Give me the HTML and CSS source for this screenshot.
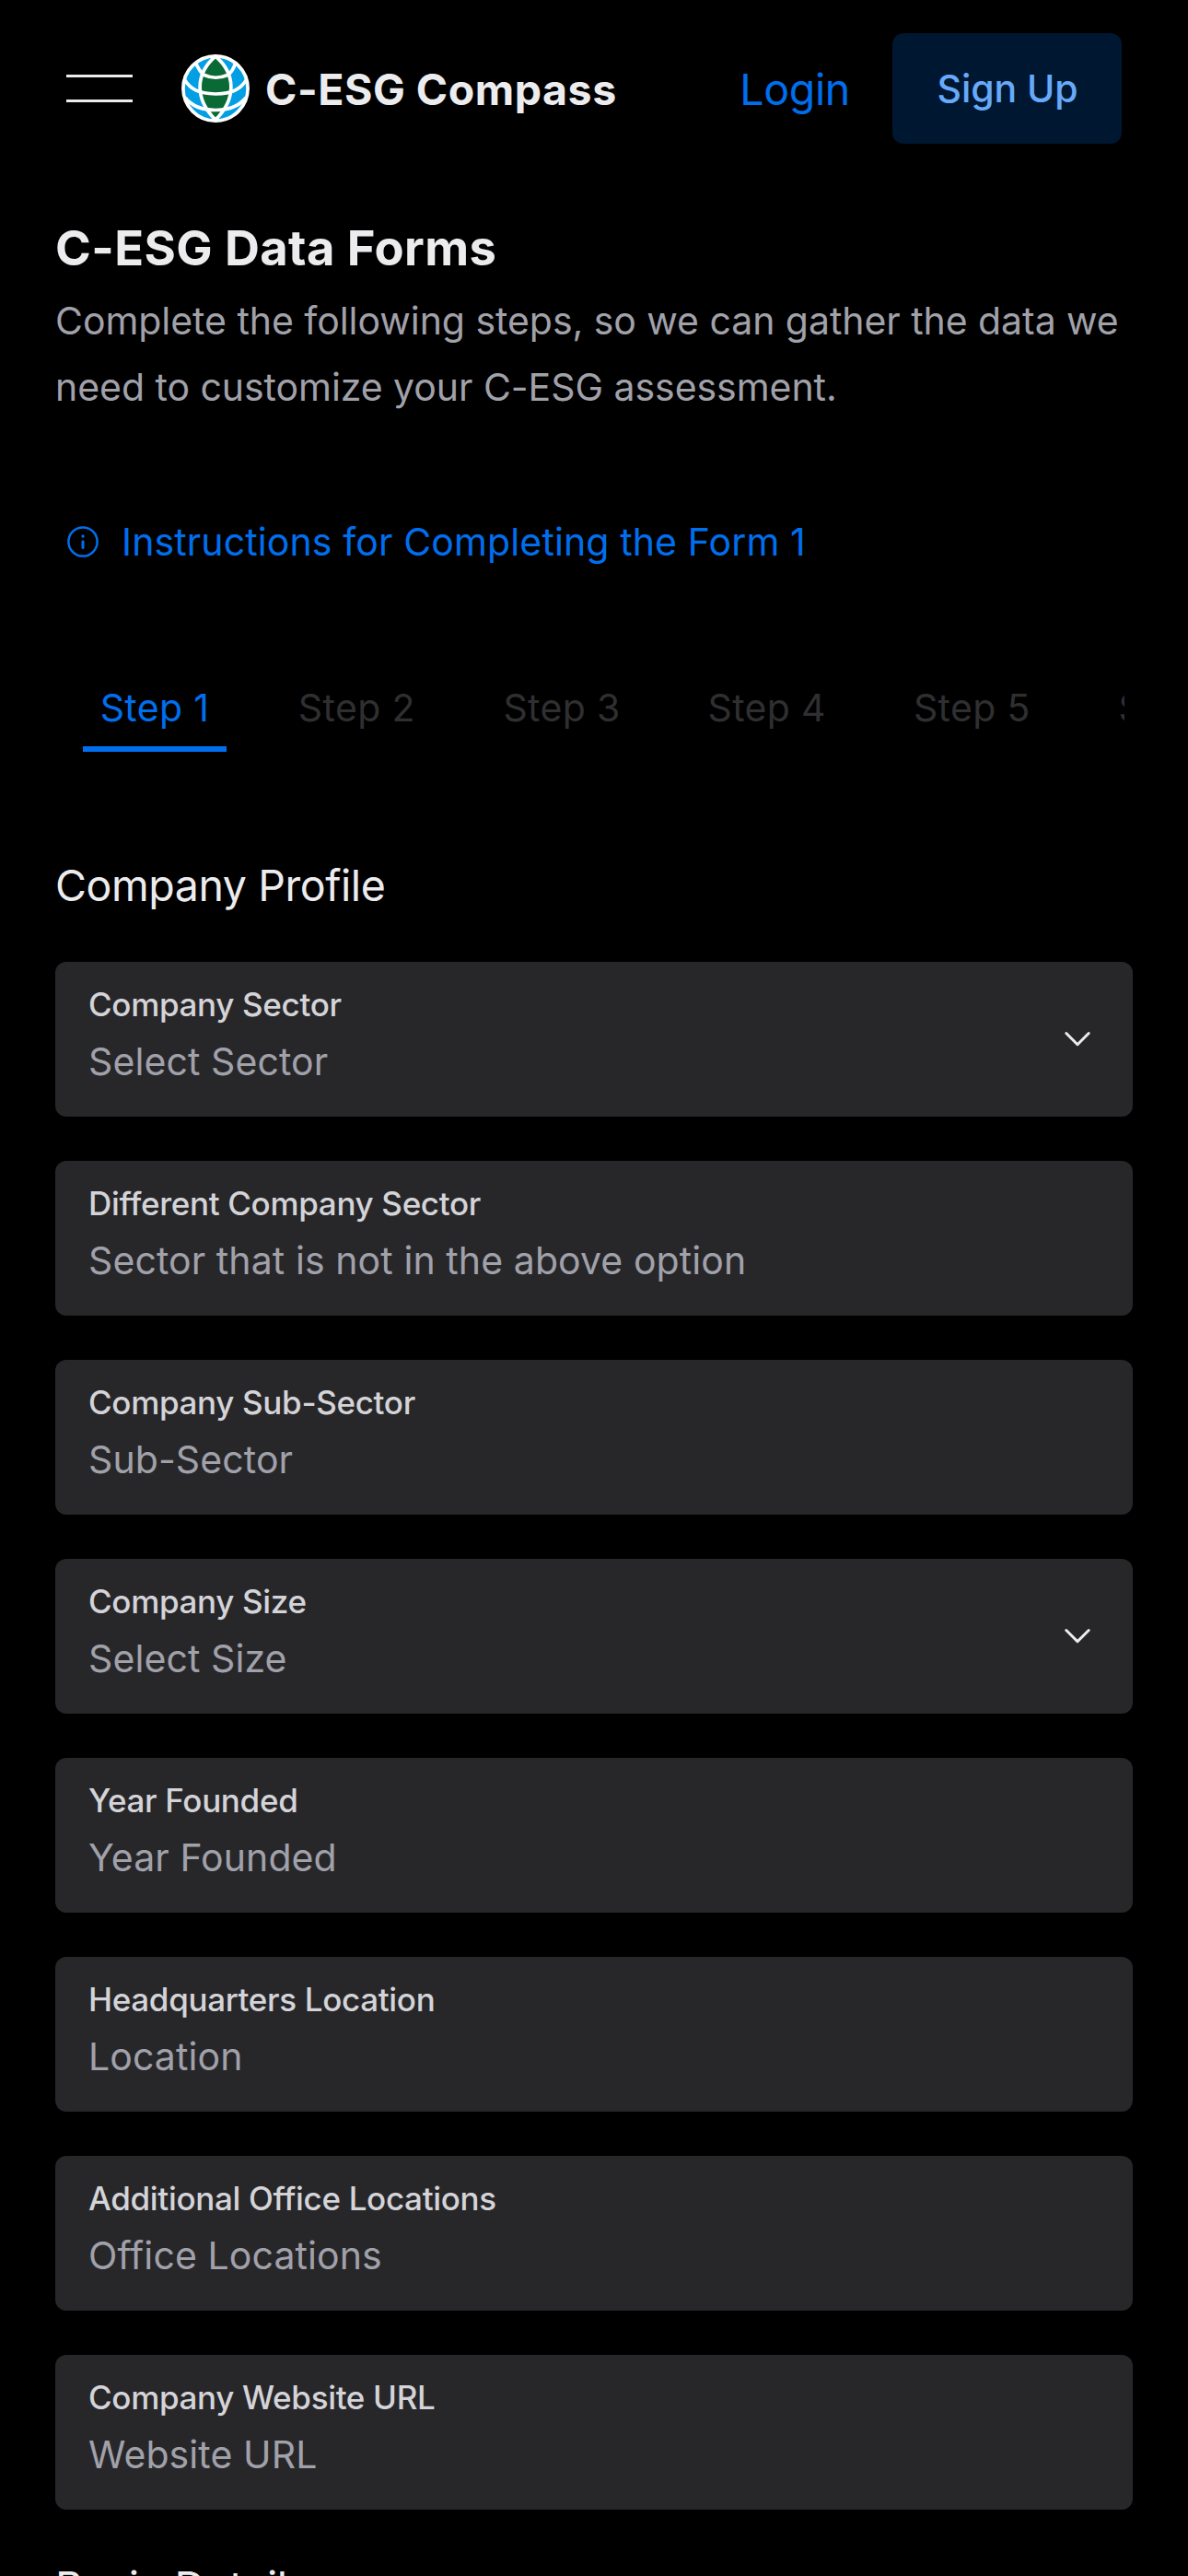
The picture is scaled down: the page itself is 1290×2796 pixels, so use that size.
FILE: index.html
```html
<!DOCTYPE html>
<html lang="en">
<head>
<meta charset="utf-8">
<title>C-ESG Compass</title>
<link rel="stylesheet" href="styles.css">
</head>
<body>
<header class="navbar">
  <button class="menu-toggle" aria-label="Open menu"><span></span><span></span></button>
  <a class="brand">
    <svg class="logo" viewBox="0 0 74 74">
      <circle cx="37" cy="37" r="35.4" fill="#039fe5"/>
      <path d="M37 2C15 21 14 48 37 71C60 48 59 21 37 2Z" fill="#0a6a35"/>
      <g fill="none" stroke="#fff" stroke-width="3.7">
        <circle cx="37" cy="37" r="35.1"/>
        <path d="M37 2C15 21 14 48 37 71C60 48 59 21 37 2Z"/>
        <path d="M15 8Q20 20 25 22.500Q37 28 50 22.500Q56 19 59 8"/>
        <path d="M3 27C10 38 18 42.500 37 43C56 42.500 64 38 71 27"/>
        <path d="M4 47C12 57 24 60.500 37 60.500C50 60.500 62 57 70 47"/>
      </g>
    </svg>
    <span class="brand-name">C-ESG Compass</span>
  </a>
  <nav class="actions">
    <a class="login">Login</a>
    <a class="signup">Sign Up</a>
  </nav>
</header>
<main class="content">
  <h1 class="title">C-ESG Data Forms</h1>
  <p class="intro">Complete the following steps, so we can gather the data we need to customize your C-ESG assessment.</p>
  <a class="instructions">
    <svg class="info" viewBox="0 0 36 36">
      <circle cx="18" cy="18" r="15.600" fill="none" stroke="currentColor" stroke-width="2.500"/>
      <circle cx="18" cy="12" r="1.700" fill="currentColor"/>
      <path d="M18 17.700V24.500" stroke="currentColor" stroke-width="3" stroke-linecap="round"/>
    </svg>
    <span>Instructions for Completing the Form 1</span>
  </a>
  <div class="tabs">
    <span class="tab active">Step 1</span>
    <span class="tab">Step 2</span>
    <span class="tab">Step 3</span>
    <span class="tab">Step 4</span>
    <span class="tab">Step 5</span>
    <span class="tab">Step 6</span>
  </div>
  <h2 class="section">Company Profile</h2>
  <form class="fields">
    <div class="field">
      <div class="texts"><span class="label">Company Sector</span><span class="value">Select Sector</span></div>
      <svg class="chevron" viewBox="0 0 48 48"><path d="M11.800 17.500L24 29.700L36.200 17.500"/></svg>
    </div>
    <div class="field">
      <div class="texts"><span class="label">Different Company Sector</span><span class="value">Sector that is not in the above option</span></div>
    </div>
    <div class="field">
      <div class="texts"><span class="label">Company Sub-Sector</span><span class="value">Sub-Sector</span></div>
    </div>
    <div class="field">
      <div class="texts"><span class="label">Company Size</span><span class="value">Select Size</span></div>
      <svg class="chevron" viewBox="0 0 48 48"><path d="M11.800 17.500L24 29.700L36.200 17.500"/></svg>
    </div>
    <div class="field">
      <div class="texts"><span class="label">Year Founded</span><span class="value">Year Founded</span></div>
    </div>
    <div class="field">
      <div class="texts"><span class="label">Headquarters Location</span><span class="value">Location</span></div>
    </div>
    <div class="field">
      <div class="texts"><span class="label">Additional Office Locations</span><span class="value">Office Locations</span></div>
    </div>
    <div class="field">
      <div class="texts"><span class="label">Company Website URL</span><span class="value">Website URL</span></div>
    </div>
  </form>
  <h2 class="section next">Basic Details</h2>
</main>
</body>
</html>
```
FILE: styles.css
```css
* {
  box-sizing: border-box;
}

html {
  background: #000;
}

body {
  margin: 0;
  height: 2796px;
  overflow: hidden;
  background: #000;
  color: #ececee;
  font-family: Inter, "Liberation Sans", sans-serif;
}

.navbar {
  display: flex;
  align-items: center;
  height: 192px;
  padding: 0 72px;
}

.menu-toggle {
  display: flex;
  flex-direction: column;
  gap: 24px;
  width: 72px;
  padding: 0;
  border: 0;
  background: none;
}

.menu-toggle span {
  width: 72px;
  height: 3px;
  background: #ececee;
}

.brand {
  display: flex;
  align-items: center;
  gap: 17px;
  margin-left: 53px;
}

.logo {
  width: 74px;
  height: 74px;
}

.brand-name {
  padding-top: 2px;
  font-size: 46.500px;
  font-weight: 700;
  line-height: 72px;
  letter-spacing: 0.520px;
}

.actions {
  display: flex;
  align-items: center;
  gap: 46px;
  margin-left: auto;
}

.login {
  padding-top: 2px;
  color: #006fee;
  font-size: 46.500px;
  line-height: 72px;
  letter-spacing: -0.340px;
}

.signup {
  width: 249px;
  padding-left: 1px;
  border-radius: 12px;
  background: #001731;
  color: #66aaf9;
  font-size: 41px;
  font-weight: 500;
  line-height: 120px;
  letter-spacing: -0.100px;
  text-align: center;
}

.content {
  padding: 41px 60px 0;
}

.title {
  margin: 0;
  font-size: 52.500px;
  font-weight: 700;
  line-height: 72px;
  letter-spacing: 0.400px;
}

.intro {
  margin: 7px 0 0;
  color: #a1a1aa;
  font-size: 41px;
  line-height: 72px;
  letter-spacing: -0.050px;
}

.instructions {
  display: flex;
  align-items: center;
  gap: 24px;
  margin-top: 96px;
  padding-left: 12px;
  color: #006fee;
  font-size: 41px;
  line-height: 72px;
  letter-spacing: 0.120px;
}

.info {
  width: 36px;
  height: 36px;
}

.tabs {
  display: flex;
  gap: 24px;
  height: 96px;
  margin: 96px 9px 0;
  padding-left: 3px;
  overflow: hidden;
}

.tab {
  flex: 0 0 198.700px;
  color: #2f2f31;
  font-size: 41px;
  line-height: 96px;
  letter-spacing: 0.350px;
  text-align: center;
}

.tab.active {
  flex-basis: 192px;
  background: linear-gradient(#006fee, #006fee) center bottom / 156px 6px no-repeat;
  color: #006fee;
}

.section {
  margin: 109px 0 47px;
  font-size: 46.500px;
  font-weight: 400;
  line-height: 72px;
  letter-spacing: -0.426px;
}

.section.next {
  margin-top: 48px;
}

.fields {
  display: flex;
  flex-direction: column;
  gap: 48px;
}

.field {
  display: flex;
  align-items: center;
  justify-content: space-between;
  height: 168px;
  padding: 0 36px;
  border-radius: 12px;
  background: #27272a;
}

.texts {
  display: flex;
  flex-direction: column;
  align-self: flex-start;
  gap: 7.500px;
  padding-top: 22px;
}

.label {
  color: #d4d4d8;
  font-size: 35px;
  font-weight: 500;
  line-height: 48px;
  letter-spacing: -0.330px;
}

.value {
  color: #a1a1aa;
  font-size: 41px;
  line-height: 60px;
  letter-spacing: 0.090px;
}

.chevron {
  width: 48px;
  height: 48px;
  fill: none;
  stroke: #ececee;
  stroke-width: 3;
  stroke-linecap: round;
  stroke-linejoin: round;
}
```
